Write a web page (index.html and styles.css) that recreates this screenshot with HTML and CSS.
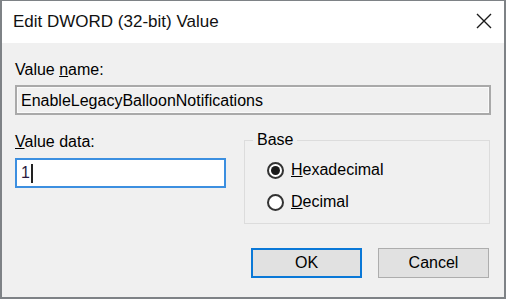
FILE: index.html
```html
<!DOCTYPE html>
<html>
	<head>
		<title>Edit DWORD (32-bit) Value</title>
		<link rel="stylesheet" href="styles.css">
	</head>
	<body>
		<div class="window">
			<div class="titlebar">
				<span class="title">Edit DWORD (32-bit) Value</span>
				<svg class="close" width="16" height="16" viewBox="0 0 16 16">
					<path d="M1 1 L15 15 M15 1 L1 15" stroke="#1a1a1a" stroke-width="1.4" fill="none" />
				</svg>
			</div>

			<div class="content">
				<div class="label name-label">Value <u>n</u>ame:</div>
				<div class="name-box">EnableLegacyBalloonNotifications</div>

				<div class="row">
					<div class="data-col">
						<div class="label"><u>V</u>alue data:</div>
						<div class="data-box">1<span class="caret"></span></div>
					</div>
					<div class="group">
						<span class="legend">Base</span>
						<div class="radio">
							<span class="dot checked"></span>
							<span><u>H</u>exadecimal</span>
						</div>
						<div class="radio">
							<span class="dot"></span>
							<span><u>D</u>ecimal</span>
						</div>
					</div>
				</div>

				<div class="buttons">
					<div class="btn default">OK</div>
					<div class="btn">Cancel</div>
				</div>
			</div>
		</div>
	</body>
</html>
```

FILE: styles.css
```css
body {
	margin: 0;
	background-color: #fff;
	font-family: "Liberation Sans", Arial, sans-serif;
	font-size: 16px;
	color: #000;
}

.window {
	width: 506px;
	height: 299px;
	box-sizing: border-box;
	border: 2px solid #7e8286;
	border-top-width: 1px;
	background-color: #f0f0f0;
}

.titlebar {
	height: 42px;
	background-color: #fff;
	display: flex;
	align-items: center;
	justify-content: space-between;
	padding: 0 12px 0 11px;
}

.title {
	font-size: 17px;
	color: #111;
}

.close {
	margin-top: -2px;
}

.content {
	padding: 0 13px;
}

.label u {
	text-decoration-thickness: 1px;
}

.name-label {
	padding-top: 18px;
	height: 24px;
}

.name-box {
	height: 30px;
	box-sizing: border-box;
	border: 2px solid #a9a9a9;
	box-shadow: inset 0 0 0 1px #fafafa;
	padding: 5px 4px;
	line-height: 18px;
}

.row {
	display: flex;
	gap: 18px;
	margin-top: 18px;
}

.data-col {
	width: 211px;
}

.data-col .label {
	height: 25px;
}

.data-box {
	height: 30px;
	box-sizing: border-box;
	border: 2px solid #3c8fe0;
	background-color: #fff;
	padding: 5px 4px;
	line-height: 18px;
	display: flex;
	align-items: center;
	color: #2a1a40;
}

.caret {
	display: inline-block;
	width: 2px;
	height: 19px;
	background-color: #222;
	margin-left: 1px;
}

.group {
	position: relative;
	width: 246px;
	height: 84px;
	box-sizing: border-box;
	margin-top: 7px;
	border: 1px solid #dcdcdc;
	padding: 13px 0 0 22px;
}

.legend {
	position: absolute;
	top: -10px;
	left: 8px;
	padding: 0 4px;
	background-color: #f0f0f0;
}

.radio {
	display: flex;
	align-items: center;
	gap: 7px;
	height: 32px;
}

.dot {
	width: 17px;
	height: 17px;
	box-sizing: border-box;
	border: 2px solid #333;
	border-radius: 50%;
	background-color: #fff;
	display: flex;
	align-items: center;
	justify-content: center;
}

.dot.checked::after {
	content: "";
	width: 9px;
	height: 9px;
	border-radius: 50%;
	background-color: #1a1a1a;
}

.buttons {
	display: flex;
	justify-content: flex-end;
	gap: 16px;
	margin-top: 24px;
	padding-right: 2px;
}

.btn {
	width: 111px;
	height: 30px;
	box-sizing: border-box;
	border: 1px solid #adadad;
	background-color: #e1e1e1;
	display: flex;
	align-items: center;
	justify-content: center;
}

.btn.default {
	border: 2px solid #0a78d7;
}
```
